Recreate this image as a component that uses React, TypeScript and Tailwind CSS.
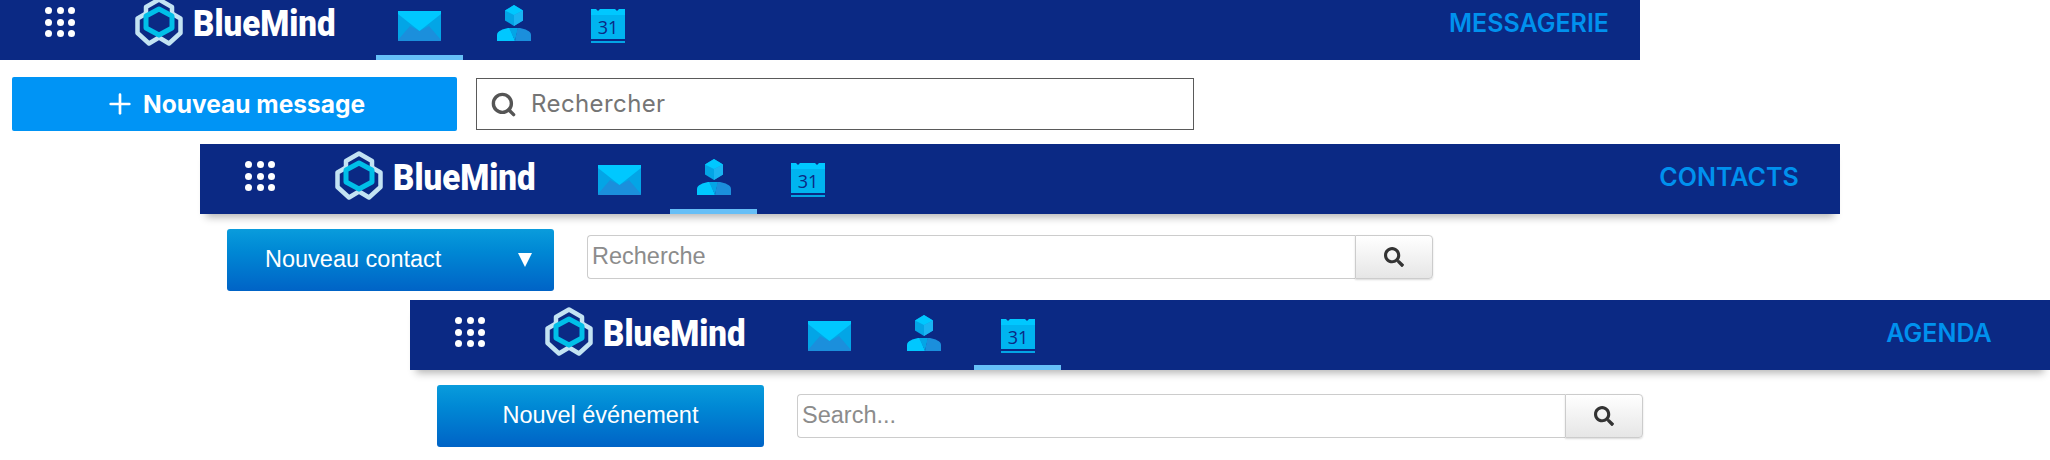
import { Plus, Search } from "lucide-react";
import { FaSearch } from "react-icons/fa";

const Logo = () => (
  <svg width="48" height="50" viewBox="0 0 48 50" className="shrink-0">
    <g fill="none" stroke="#c3e3f3" strokeWidth="4.500" strokeLinejoin="round">
      <path d="M11 18 V10 L24 2.500 L37 10 V18" />
      <path d="M12 16 L2.500 21.500 V36 L14 46.500 L24 40.500" />
      <path d="M36 16 L45.500 21.500 V36 L34 46.500 L24 40.500" />
    </g>
    <path d="M24 12 L37 19 V31 L24 38 L11 31 V19 Z" fill="none" stroke="#00bfe8" strokeWidth="5" strokeLinejoin="round" />
  </svg>
);

const GridIcon = () => (
  <div className="grid grid-cols-3 gap-[4.500px] w-[30px]">
    {Array.from({ length: 9 }).map((_, i) => (
      <span key={i} className="w-[7px] h-[7px] rounded-full bg-white" />
    ))}
  </div>
);

const MailIcon = () => (
  <svg width="43" height="30" viewBox="0 0 43 30">
    <rect width="43" height="30" rx="1" fill="#03a5e6" />
    <path d="M0 29 12 15 21.500 20 31 15 43 29A1 1 0 0 1 42 30H1A1 1 0 0 1 0 29Z" fill="#1b8fdc" />
    <path d="M0 0H43V3L21.500 20 0 3Z" fill="#00c8ff" />
  </svg>
);

const ContactIcon = () => (
  <svg width="34" height="36" viewBox="0 0 34 36">
    <path d="M17 0 26 5.500V15.500L17 21 8 15.500V5.500Z" fill="#03a5e6" />
    <path d="M17 0 26 5.500 17 10 8 5.500Z" fill="#00c8ff" />
    <path d="M17 10 26 5.500V15.500L17 21Z" fill="#1ab4f2" />
    <path d="M0 36V30C0 26 6 24 11 23H13L18 36Z" fill="#00c8ff" />
    <path d="M12 23H21L18 36Z" fill="#03a5e6" />
    <path d="M20.500 23H23C28 24 34 26 34 30V36H18Z" fill="#1b8fdc" />
  </svg>
);

const CalendarIcon = () => (
  <svg width="34" height="34" viewBox="0 0 34 34">
    <rect y="5" width="34" height="25" fill="#00b4f0" />
    <path d="M0 0H5L7 2 9 0H24L26 2 28 0H34V6H0Z" fill="#00c8ff" />
    <rect y="32" width="34" height="2" fill="#03a5e6" />
    <text x="17" y="25" textAnchor="middle" fontSize="18" fill="#0b2984" fontFamily="'Open Sans', sans-serif">31</text>
  </svg>
);

function Header({ title, active, clipped }: { title: string; active: number; clipped?: boolean }) {
  const icons = [
    { el: <MailIcon />, y: "pt-[21px]" },
    { el: <ContactIcon />, y: "pt-[15px]" },
    { el: <CalendarIcon />, y: "pt-[19px]" },
  ];
  return (
    <div className={`relative overflow-hidden bg-[#0b2984] ${clipped ? "h-[60px]" : "h-[70px]"}`}>
      <div className={`flex h-[70px] items-start ${clipped ? "-mt-[10px]" : ""}`}>
        <div className="pl-[45px] pt-[17px] w-[135px] shrink-0">
          <GridIcon />
        </div>
        <div className="pt-[7px] w-[58px] shrink-0">
          <Logo />
        </div>
        <div className="w-[183px] shrink-0 pt-[14px] font-['Roboto',sans-serif] font-black text-white text-[36px] leading-[40px] origin-left scale-x-[0.92] whitespace-nowrap">
          BlueMind
        </div>
        <div className="flex gap-[7px]">
          {icons.map((ic, i) => (
            <div key={i} className={`w-[87px] h-[70px] flex justify-center ${ic.y} ${i === active ? "border-b-[5px] border-[#66bff7]" : ""}`}>
              {ic.el}
            </div>
          ))}
        </div>
        <div className="ml-auto w-[222px] shrink-0 pt-[19px] text-center font-['Inter',sans-serif] font-semibold text-[#0091ee] text-[25px] leading-[28px]">
          {title}
        </div>
      </div>
    </div>
  );
}

function OldToolbar({ label, caret, placeholder, inputTop }: { label: string; caret?: boolean; placeholder: string; inputTop: string }) {
  return (
    <div className="flex items-start pl-[27px] pt-[15px]">
      <button className={`w-[327px] h-[62px] rounded-[3px] bg-gradient-to-b from-[#0a9cdc] to-[#0063c6] text-white text-[23.500px] font-['Liberation_Sans',sans-serif] flex items-center ${caret ? "justify-between pl-[38px] pr-[22px]" : "justify-center"}`}>
        <span>{label}</span>
        {caret ? <span className="w-0 h-0 border-l-[7px] border-r-[7px] border-t-[14px] border-l-transparent border-r-transparent border-t-white" /> : null}
      </button>
      <div className={`ml-[33px] flex h-[44px] ${inputTop}`}>
        <div className="w-[768px] border border-r-0 border-[#cccccc] rounded-l-[4px] pl-[4px] flex items-center text-[#8c8c8c] text-[23.500px] font-['Liberation_Sans',sans-serif]">
          {placeholder}
        </div>
        <div className="w-[78px] border border-[#cccccc] rounded-r-[4px] bg-gradient-to-b from-white to-[#e6e6e6] shadow-[0_1px_2px_rgba(0,0,0,0.15)] flex items-center justify-center">
          <FaSearch size={20} className="text-[#333333]" />
        </div>
      </div>
    </div>
  );
}

export default function App() {
  return (
    <div className="w-[2050px] h-[460px] overflow-hidden bg-white">
      <section className="w-[1640px]">
        <Header title="MESSAGERIE" active={0} clipped />
        <div className="flex items-center pl-[12px] pt-[17px]">
          <button className="w-[445px] h-[54px] rounded-[2px] bg-[#0094f5] text-white flex items-center justify-center gap-[7px] font-['Inter',sans-serif] font-bold text-[24.500px]">
            <Plus size={32} strokeWidth={2} />
            <span>Nouveau message</span>
          </button>
          <div className="ml-[19px] w-[718px] h-[52px] border border-[#5a5a5a] flex items-center pl-[13px] gap-[14px] text-[#757575] text-[24px] tracking-[0.4px] font-['Inter',sans-serif]">
            <Search size={27} strokeWidth={3} className="text-[#555555]" />
            <span>Rechercher</span>
          </div>
        </div>
      </section>
      <section className="ml-[200px] mt-[13px] w-[1640px]">
        <div className="shadow-[0_9px_8px_-6px_rgba(0,0,0,0.3)]">
          <Header title="CONTACTS" active={1} />
        </div>
        <OldToolbar label="Nouveau contact" caret placeholder="Recherche" inputTop="mt-[6px]" />
      </section>
      <section className="ml-[410px] mt-[9px] w-[1640px]">
        <div className="shadow-[0_9px_8px_-6px_rgba(0,0,0,0.3)]">
          <Header title="AGENDA" active={2} />
        </div>
        <OldToolbar label="Nouvel événement" placeholder="Search..." inputTop="mt-[9px]" />
      </section>
    </div>
  );
}
